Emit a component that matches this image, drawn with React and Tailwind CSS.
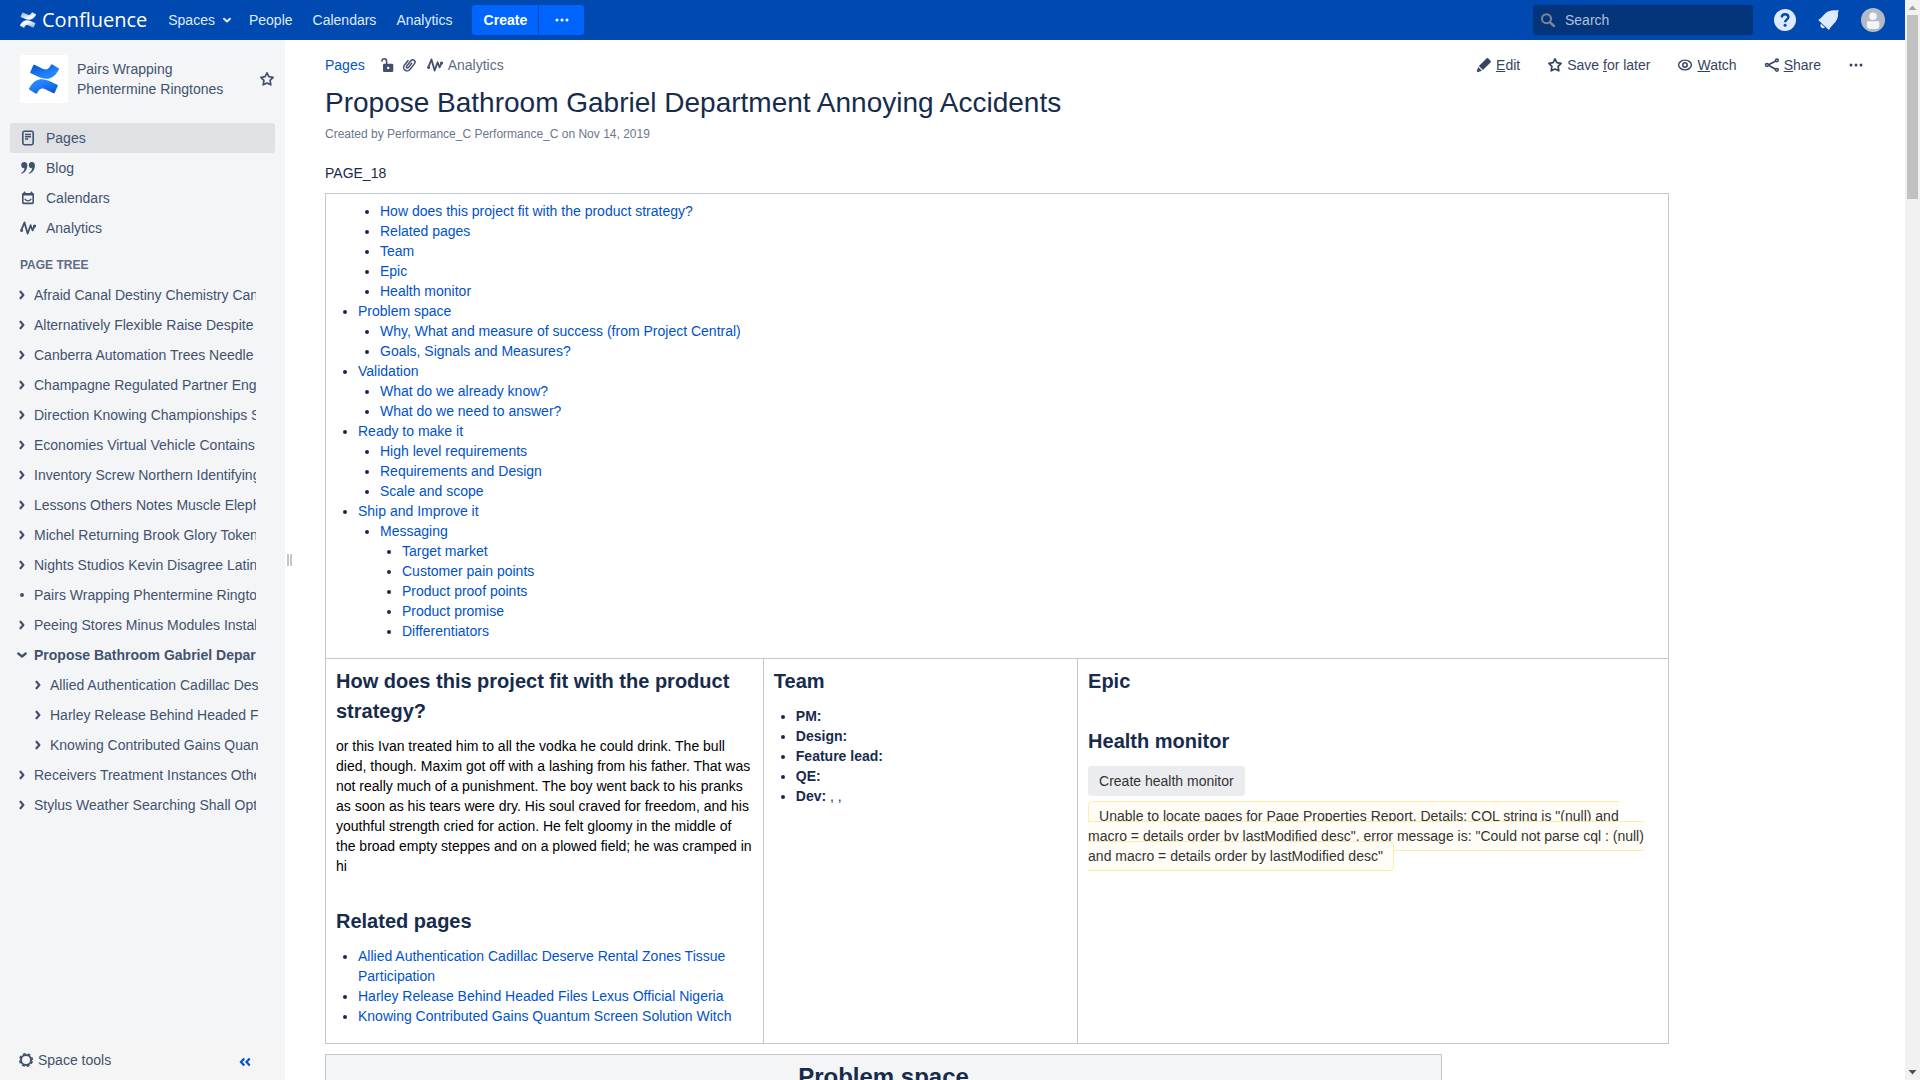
import React from "react";

const CONFLUENCE_BOTTOM =
  "M.87 18.257c-.248.382-.53.875-.763 1.245a.764.764 0 0 0 .255 1.04l4.965 3.054a.764.764 0 0 0 1.058-.26c.199-.332.454-.763.733-1.221 1.967-3.247 3.945-2.853 7.508-1.146l4.957 2.337a.764.764 0 0 0 1.028-.382l2.364-5.346a.764.764 0 0 0-.382-1 599.851 599.851 0 0 1-4.965-2.361C10.911 10.97 5.224 11.185.87 18.257z";
const CONFLUENCE_TOP =
  "M23.131 5.743c.249-.405.531-.875.764-1.25a.764.764 0 0 0-.256-1.034L18.675.404a.764.764 0 0 0-1.058.26c-.195.335-.451.763-.734 1.225-1.966 3.246-3.945 2.85-7.508 1.146L4.437.694a.764.764 0 0 0-1.027.382L1.046 6.422a.764.764 0 0 0 .382 1c1.039.49 3.105 1.467 4.965 2.361 6.698 3.246 12.392 3.029 16.738-4.04z";

function ConfluenceMark({ id, from, to, className }) {
  return (
    <svg viewBox="0 0 24 24" className={className} aria-hidden="true">
      <defs>
        <linearGradient id={`${id}-lower`} x1="1" y1="1" x2="0.2" y2="0">
          <stop offset="0" stopColor={from} />
          <stop offset="0.75" stopColor={to} />
        </linearGradient>
        <linearGradient id={`${id}-upper`} x1="0" y1="0" x2="0.8" y2="1">
          <stop offset="0" stopColor={from} />
          <stop offset="0.75" stopColor={to} />
        </linearGradient>
      </defs>
      <path d={CONFLUENCE_BOTTOM} fill={`url(#${id}-lower)`} />
      <path d={CONFLUENCE_TOP} fill={`url(#${id}-upper)`} />
    </svg>
  );
}

function Icon({ children, className = "size-4" }) {
  return (
    <svg
      viewBox="0 0 16 16"
      className={`shrink-0 ${className}`}
      fill="none"
      stroke="currentColor"
      strokeWidth="1.6"
      strokeLinecap="round"
      strokeLinejoin="round"
      aria-hidden="true"
    >
      {children}
    </svg>
  );
}

const Star = () => (
  <Icon>
    <path d="M8 1.8l1.900 3.900 4.200.6-3 3 .7 4.500L8 12l-3.800 1.800.7-4.500-3-3 4.200-.6z" strokeWidth="1.700" />
  </Icon>
);
const Pulse = () => (
  <Icon>
    <path d="M1.4 10.2L4.5 2.4l3.1 11.2 3-8.4 2 5.2 2-4.4" strokeWidth="1.800" />
    <circle cx="1.6" cy="10.4" r=".7" fill="currentColor" />
    <circle cx="14.5" cy="6" r=".8" fill="currentColor" />
  </Icon>
);
const Dots = () => (
  <Icon>
    <g fill="currentColor" stroke="none">
      <circle cx="3" cy="8" r="1.5" />
      <circle cx="8" cy="8" r="1.5" />
      <circle cx="13" cy="8" r="1.5" />
    </g>
  </Icon>
);
const PageIcon = () => (
  <Icon>
    <rect x="2.8" y="1.3" width="10.4" height="13.4" rx="1.6" />
    <path d="M5 4.500h6M5 6.700h6M5 9h3.200" strokeWidth="1.4" strokeLinecap="butt" />
  </Icon>
);
const Quote = () => (
  <Icon>
    <g fill="currentColor" stroke="none">
      <path d="M4.2 2a3 3 0 0 1 3.1 3.3c0 4-2 7.200-5.400 8.400-.7.200-1-.600-.4-.900 1.900-1 2.900-2.600 3-4.500A3.100 3.100 0 1 1 4.200 2z" />
      <path d="M11.800 2a3 3 0 0 1 3.100 3.300c0 4-2 7.200-5.400 8.400-.7.200-1-.600-.4-.900 1.900-1 2.900-2.600 3-4.500A3.100 3.100 0 1 1 11.800 2z" />
    </g>
  </Icon>
);
const CalendarIcon = () => (
  <Icon>
    <rect x="2.800" y="3.800" width="10.400" height="9.600" rx=".8" />
    <path d="M2.800 4.500h10.400M4.500 2.600v2M11.500 2.600v2" strokeWidth="2" />
    <path d="M5 9.200c1.500 2.200 4.500 2.200 6 0" strokeWidth="1.300" />
  </Icon>
);
const Lock = () => (
  <Icon>
    <rect x="4" y="6.700" width="10.300" height="8.300" rx="1.300" fill="currentColor" stroke="none" />
    <circle cx="9.200" cy="10.900" r="1.200" fill="white" stroke="none" />
    <path d="M7.600 7V4.200C7.600 2.600 6.800 1.800 5.300 1.800S3 2.600 3 4" />
  </Icon>
);
const Clip = () => (
  <Icon>
    <g transform="rotate(38 8 8)" strokeWidth="1.500">
      <path d="M4.500 5v6a3.500 3.500 0 0 0 7 0V3.500a2.300 2.300 0 0 0-4.600 0v7a1.100 1.100 0 0 0 2.200 0V5" />
    </g>
  </Icon>
);
const Pencil = () => (
  <Icon>
    <g fill="currentColor" stroke="none">
      <path d="M10.200 1.700a1.700 1.700 0 0 1 2.400 0l1.700 1.700a1.700 1.700 0 0 1 0 2.400L6.900 13 2.900 9z" />
      <path d="M2.200 10.100l3.700 3.700-4 1.300a.8.800 0 0 1-1-1z" />
    </g>
  </Icon>
);
const Eye = () => (
  <Icon>
    <path d="M8 3.100c3.500 0 6.400 2.500 6.400 4.900S11.500 12.900 8 12.900 1.600 10.400 1.600 8 4.500 3.100 8 3.100z" strokeWidth="1.400" />
    <circle cx="8" cy="8" r="2.200" strokeWidth="1.500" />
  </Icon>
);
const ShareIcon = () => (
  <Icon>
    <path d="M4 8l8-4M4 8l8 4.500" />
    <g fill="white" strokeWidth="1.500">
      <circle cx="2.900" cy="8" r="1.400" />
      <circle cx="12.900" cy="3.300" r="1.400" />
      <circle cx="12.900" cy="12.800" r="1.400" />
    </g>
  </Icon>
);
const Gear = () => (
  <Icon>
    <circle cx="8" cy="8" r="5" strokeWidth="2" />
    <circle cx="8" cy="8" r="6.300" strokeWidth="1.600" strokeLinecap="butt" strokeDasharray="2.800 2.148" strokeDashoffset="-1.074" />
  </Icon>
);
const Chevron = ({ down }) => (
  <Icon className="size-3">
    {down ? (
      <path d="M3 6l5 4 5-4" strokeWidth="3" />
    ) : (
      <path d="M6 3.700L9.800 8 6 12.300" strokeWidth="3" />
    )}
  </Icon>
);

const NAV = [
  ["Pages", PageIcon, true],
  ["Blog", Quote],
  ["Calendars", CalendarIcon],
  ["Analytics", Pulse],
];

const TREE = [
  { t: "Afraid Canal Destiny Chemistry Can" },
  { t: "Alternatively Flexible Raise Despite" },
  { t: "Canberra Automation Trees Needle" },
  { t: "Champagne Regulated Partner Eng" },
  { t: "Direction Knowing Championships S" },
  { t: "Economies Virtual Vehicle Contains" },
  { t: "Inventory Screw Northern Identifying" },
  { t: "Lessons Others Notes Muscle Eleph" },
  { t: "Michel Returning Brook Glory Token" },
  { t: "Nights Studios Kevin Disagree Latin" },
  { t: "Pairs Wrapping Phentermine Ringtones", leaf: true },
  { t: "Peeing Stores Minus Modules Install" },
  {
    t: "Propose Bathroom Gabriel Department",
    open: true,
    kids: [
      "Allied Authentication Cadillac Deserve",
      "Harley Release Behind Headed Files",
      "Knowing Contributed Gains Quantum",
    ],
  },
  { t: "Receivers Treatment Instances Other" },
  { t: "Stylus Weather Searching Shall Opt" },
];

const TOC = [
  [
    null,
    [
      ["How does this project fit with the product strategy?"],
      ["Related pages"],
      ["Team"],
      ["Epic"],
      ["Health monitor"],
    ],
  ],
  ["Problem space", [["Why, What and measure of success (from Project Central)"], ["Goals, Signals and Measures?"]]],
  ["Validation", [["What do we already know?"], ["What do we need to answer?"]]],
  ["Ready to make it", [["High level requirements"], ["Requirements and Design"], ["Scale and scope"]]],
  [
    "Ship and Improve it",
    [
      [
        "Messaging",
        [["Target market"], ["Customer pain points"], ["Product proof points"], ["Product promise"], ["Differentiators"]],
      ],
    ],
  ],
];

const LINK = "text-[#0052cc] hover:underline";

function TocList({ items }) {
  return (
    <ul className="list-disc pl-[22px]">
      {items.map(([label, kids], i) => (
        <li key={i} className={label ? "" : "list-none"}>
          {label && (
            <a href="#" className={LINK}>
              {label}
            </a>
          )}
          {kids && <TocList items={kids} />}
        </li>
      ))}
    </ul>
  );
}

function TreeRow({ label, open, leaf, bold }) {
  return (
    <div className="flex h-[30px] items-center">
      <button type="button" aria-label={`Toggle ${label}`} className="flex w-[18px] shrink-0 items-center">
        {leaf ? <span className="ml-1 size-1 rounded-full bg-[#42526e]" /> : <Chevron down={open} />}
      </button>
      <a href="#" className={`w-[222px] overflow-hidden whitespace-nowrap ${bold ? "font-bold" : ""}`}>
        {label}
      </a>
    </div>
  );
}

function Header() {
  return (
    <header className="flex h-10 shrink-0 items-center bg-[#0049b0] px-5 text-[#deebff]">
      <a href="#" className="flex items-center gap-[6px] text-white">
        <ConfluenceMark id="brand" from="#7fa4d8" to="#ffffff" className="size-4" />
        <span className="font-['Open_Sans',sans-serif] text-xl leading-7">Confluence</span>
      </a>
      <nav className="ml-[21px] flex items-center gap-5">
        <button type="button" className="flex items-center gap-[6px]">
          Spaces
          <svg viewBox="0 0 12 12" className="size-3" fill="none" stroke="currentColor" strokeWidth="2" strokeLinecap="round" strokeLinejoin="round" aria-hidden="true">
            <path d="M3 4.800l3 2.800 3-2.800" />
          </svg>
        </button>
        <a href="#" className="-ml-1">People</a>
        <a href="#">Calendars</a>
        <a href="#">Analytics</a>
      </nav>
      <div className="ml-5 flex h-[30px] gap-px text-white">
        <button type="button" className="w-[66px] rounded-l-[3px] bg-[#0065ff] font-bold">
          Create
        </button>
        <button type="button" aria-label="More create options" className="flex w-[45px] items-center justify-center rounded-r-[3px] bg-[#0065ff]">
          <Dots />
        </button>
      </div>
      <label className="ml-auto flex h-[30px] w-[220px] items-center rounded-[3px] bg-[#04347a] pl-[7px]">
        <svg viewBox="0 0 16 16" className="size-4 text-[#7a869a]" fill="none" stroke="currentColor" strokeWidth="2" strokeLinecap="round" aria-hidden="true">
          <circle cx="6.500" cy="6.700" r="4.500" />
          <path d="M10 10.300l4 3.700" strokeWidth="2.400" />
        </svg>
        <input
          type="search"
          aria-label="Search"
          placeholder="Search"
          className="ml-[9px] w-40 bg-transparent outline-none placeholder:text-[#b0c2de]"
        />
      </label>
      <button type="button" aria-label="Help" className="ml-5">
        <svg viewBox="0 0 24 24" className="size-6" aria-hidden="true">
          <circle cx="12" cy="12" r="11" fill="#deebff" />
          <path d="M8.800 9.500c0-2 1.400-3.300 3.300-3.300s3.300 1.200 3.300 2.900c0 2.500-3.300 2.500-3.300 5.200" fill="none" stroke="#0049b0" strokeWidth="2.400" />
          <circle cx="12.100" cy="17.300" r="1.500" fill="#0049b0" />
        </svg>
      </button>
      <button type="button" aria-label="Notifications" className="ml-5">
        <svg viewBox="0 0 24 24" className="size-6" fill="#deebff" aria-hidden="true">
          <path d="M1.800 11.500C4.500 10 5.800 7.500 8.500 5.200 12 2.300 16 2 19 2.500c.7-.6 1.600-.8 2.200-.3.500.6.400 1.400-.3 2.100.5 3.200 0 6.700-2.700 10-2.300 2.700-4.300 4-5.700 6.900-.3.700-.7.700-1.200.2L1.700 12.500c-.4-.4-.4-.700.1-1z" />
          <path d="M4 15.700l4 3.800c-1.200 1-2.700 1-3.700.1s-1.200-2.700-.3-3.900z" />
        </svg>
      </button>
      <button type="button" aria-label="Account" className="ml-5">
        <svg viewBox="0 0 24 24" className="size-6" aria-hidden="true">
          <circle cx="12" cy="12" r="12" fill="#b3bac5" />
          <circle cx="12" cy="8.300" r="3.800" fill="#f4f5f7" />
          <path d="M6.500 13.200h11a.8.800 0 0 1 .8.800v3.700c0 2-1.300 3.200-3.200 3.200H9c-2 0-3.200-1.200-3.200-3.200V14a.8.800 0 0 1 .7-.8z" fill="#f4f5f7" />
        </svg>
      </button>
    </header>
  );
}

function Sidebar() {
  return (
    <aside className="flex w-[285px] shrink-0 flex-col bg-[#f4f5f7] text-[#42526e]">
      <div className="flex items-center pl-5 pr-[10px] pt-[15px]">
        <a href="#" aria-label="Space home" className="flex size-12 items-center justify-center rounded-[3px] bg-white">
          <ConfluenceMark id="tile" from="#0052cc" to="#2684ff" className="size-[30px]" />
        </a>
        <a href="#" className="ml-[9px] w-40">
          Pairs Wrapping Phentermine Ringtones
        </a>
        <button type="button" aria-label="Star space" className="ml-auto">
          <Star />
        </button>
      </div>
      <nav className="mt-5 px-[10px]">
        {NAV.map(([label, Glyph, active]) => (
          <a
            key={label}
            href="#"
            className={`flex h-[30px] items-center gap-[10px] rounded-[3px] pl-[10px] ${active ? "bg-[#dfe1e5]" : ""}`}
          >
            <Glyph />
            {label}
          </a>
        ))}
      </nav>
      <h2 className="mt-3 pl-5 text-xs leading-5 font-bold text-[#5e6c84]">PAGE TREE</h2>
      <div className="mt-[5px] min-h-0 flex-1 overflow-hidden pl-4">
        {TREE.map((n) => (
          <React.Fragment key={n.t}>
            <TreeRow label={n.t} open={n.open} leaf={n.leaf} bold={n.open} />
            {n.kids && (
              <div className="pl-4">
                {n.kids.map((k) => (
                  <div key={k} className="w-[226px] overflow-hidden">
                    <TreeRow label={k} />
                  </div>
                ))}
              </div>
            )}
          </React.Fragment>
        ))}
      </div>
      <div className="flex h-10 shrink-0 items-center bg-[#f5f5f5] pl-[18px] pr-8">
        <button type="button" className="flex items-center gap-1">
          <Gear />
          Space tools
        </button>
        <button type="button" aria-label="Collapse sidebar" className="ml-auto mt-1 text-[#0052cc]">
          <Icon>
            <path d="M7.200 4.500L4 8l3.200 3.500M12.700 4.500L9.500 8l3.200 3.500" strokeWidth="2.200" strokeLinecap="butt" strokeLinejoin="miter" />
          </Icon>
        </button>
      </div>
    </aside>
  );
}

function Action({ glyph, children, label }) {
  return (
    <button type="button" aria-label={label} className="flex items-center gap-1 text-[#344563]">
      {glyph}
      {children && <span>{children}</span>}
    </button>
  );
}

const CELL = "border border-[#c1c7d0] px-[10px] py-[7px] text-left align-top";
const H2 = "text-xl leading-[30px] font-bold";

function Content() {
  return (
    <main className="min-w-0 flex-1 overflow-hidden pl-[33px] pr-[41px] pt-[15px] text-[#172b4d]">
      <div className="flex items-center justify-between">
        <div className="flex items-center text-[#42526e]">
          <a href="#" className={LINK}>Pages</a>
          <button type="button" aria-label="Restrictions" className="ml-[14px]"><Lock /></button>
          <button type="button" aria-label="Attachments" className="ml-[6px]"><Clip /></button>
          <button type="button" className="ml-[10px] flex items-center gap-[5px] text-[#42526e]">
            <Pulse />
            <span className="text-[#5e6c84]">Analytics</span>
          </button>
        </div>
        <div className="flex items-center gap-[27px]">
          <Action glyph={<Pencil />}><u>E</u>dit</Action>
          <Action glyph={<Star />}>Save <u>f</u>or later</Action>
          <Action glyph={<Eye />}><u>W</u>atch</Action>
          <Action glyph={<ShareIcon />}><u>S</u>hare</Action>
          <Action glyph={<Dots />} label="More actions" />
        </div>
      </div>
      <h1 className="mt-3 text-[28px] leading-8">Propose Bathroom Gabriel Department Annoying Accidents</h1>
      <p className="mt-[5px] text-xs leading-5 text-[#6b778c]">Created by Performance_C Performance_C on Nov 14, 2019</p>
      <p className="mt-[19px]">PAGE_18</p>

      <table className="mt-[10px] w-full max-w-[1344px] table-fixed border-collapse">
        <colgroup>
          <col className="w-[32.6%]" />
          <col className="w-[23.4%]" />
          <col />
        </colgroup>
        <tbody>
          <tr>
            <td colSpan={3} className={CELL}>
              <div className="mb-[10px]">
                <TocList items={TOC} />
              </div>
            </td>
          </tr>
          <tr>
            <td className={CELL}>
              <h2 className={H2}>How does this project fit with the product strategy?</h2>
              <p className="mt-[10px] text-black">
                or this Ivan treated him to all the vodka he could drink. The bull died, though. Maxim got off with a
                lashing from his father. That was not really much of a punishment. The boy went back to his pranks as
                soon as his tears were dry. His soul craved for freedom, and his youthful strength cried for action. He
                felt gloomy in the middle of the broad empty steppes and on a plowed field; he was cramped in hi
              </p>
              <h2 className={`mt-[30px] ${H2}`}>Related pages</h2>
              <ul className="my-[10px] list-disc pl-[22px]">
                <li><a href="#" className={LINK}>Allied Authentication Cadillac Deserve Rental Zones Tissue Participation</a></li>
                <li><a href="#" className={LINK}>Harley Release Behind Headed Files Lexus Official Nigeria</a></li>
                <li><a href="#" className={LINK}>Knowing Contributed Gains Quantum Screen Solution Witch</a></li>
              </ul>
            </td>
            <td className={CELL}>
              <h2 className={H2}>Team</h2>
              <ul className="mt-[10px] list-disc pl-[22px]">
                <li><strong>PM:</strong></li>
                <li><strong>Design:</strong></li>
                <li><strong>Feature lead:</strong></li>
                <li><strong>QE:</strong></li>
                <li><strong>Dev:</strong> , ,</li>
              </ul>
            </td>
            <td className={CELL}>
              <h2 className={H2}>Epic</h2>
              <h2 className={`mt-[30px] ${H2}`}>Health monitor</h2>
              <button type="button" className="mt-[10px] block h-[30px] rounded-[3px] bg-[#ebecf0] px-[11px] text-[#333]">
                Create health monitor
              </button>
              <p className="mt-[10px] text-[#333]">
                <span className="rounded-[5px] border border-[#ffeaae] bg-[#fffdf6] px-[10px] py-[6px]">
                  Unable to locate pages for Page Properties Report. Details: CQL string is "(null) and macro = details
                  order by lastModified desc". error message is: "Could not parse cql : (null) and macro = details order
                  by lastModified desc"
                </span>
              </p>
            </td>
          </tr>
        </tbody>
      </table>

      <table className="mt-[10px] w-full max-w-[1117px] border-collapse">
        <thead>
          <tr>
            <th className="border border-[#c1c7d0] bg-[#f4f5f7] px-[10px] py-[7px] text-center text-2xl leading-[30px] font-bold">
              Problem space
            </th>
          </tr>
        </thead>
      </table>
    </main>
  );
}

function ScrollTrack() {
  return (
    <div className="flex w-[15px] shrink-0 flex-col items-center bg-[#f1f1f1]" aria-hidden="true">
      <svg viewBox="0 0 15 15" className="size-[15px] shrink-0">
        <path d="M7.500 5.500l4 4.500h-8z" fill="#a3a3a3" />
      </svg>
      <div className="h-[184px] w-[11px] bg-[#c1c1c1]" />
      <svg viewBox="0 0 15 15" className="mt-auto size-[15px] shrink-0">
        <path d="M7.500 9.500l4-4.500h-8z" fill="#505050" />
      </svg>
    </div>
  );
}

export default function App() {
  return (
    <div className="flex h-screen overflow-hidden bg-white font-['Liberation_Sans',Arial,sans-serif] text-sm leading-5">
      <div className="flex min-w-0 flex-1 flex-col">
        <Header />
        <div className="flex min-h-0 flex-1">
          <Sidebar />
          <div className="flex w-[7px] shrink-0 items-center justify-end gap-px" aria-hidden="true">
            <span className="h-3 w-[2px] bg-[#c1c7d0]" />
            <span className="h-3 w-[2px] bg-[#c1c7d0]" />
          </div>
          <Content />
        </div>
      </div>
      <ScrollTrack />
    </div>
  );
}
